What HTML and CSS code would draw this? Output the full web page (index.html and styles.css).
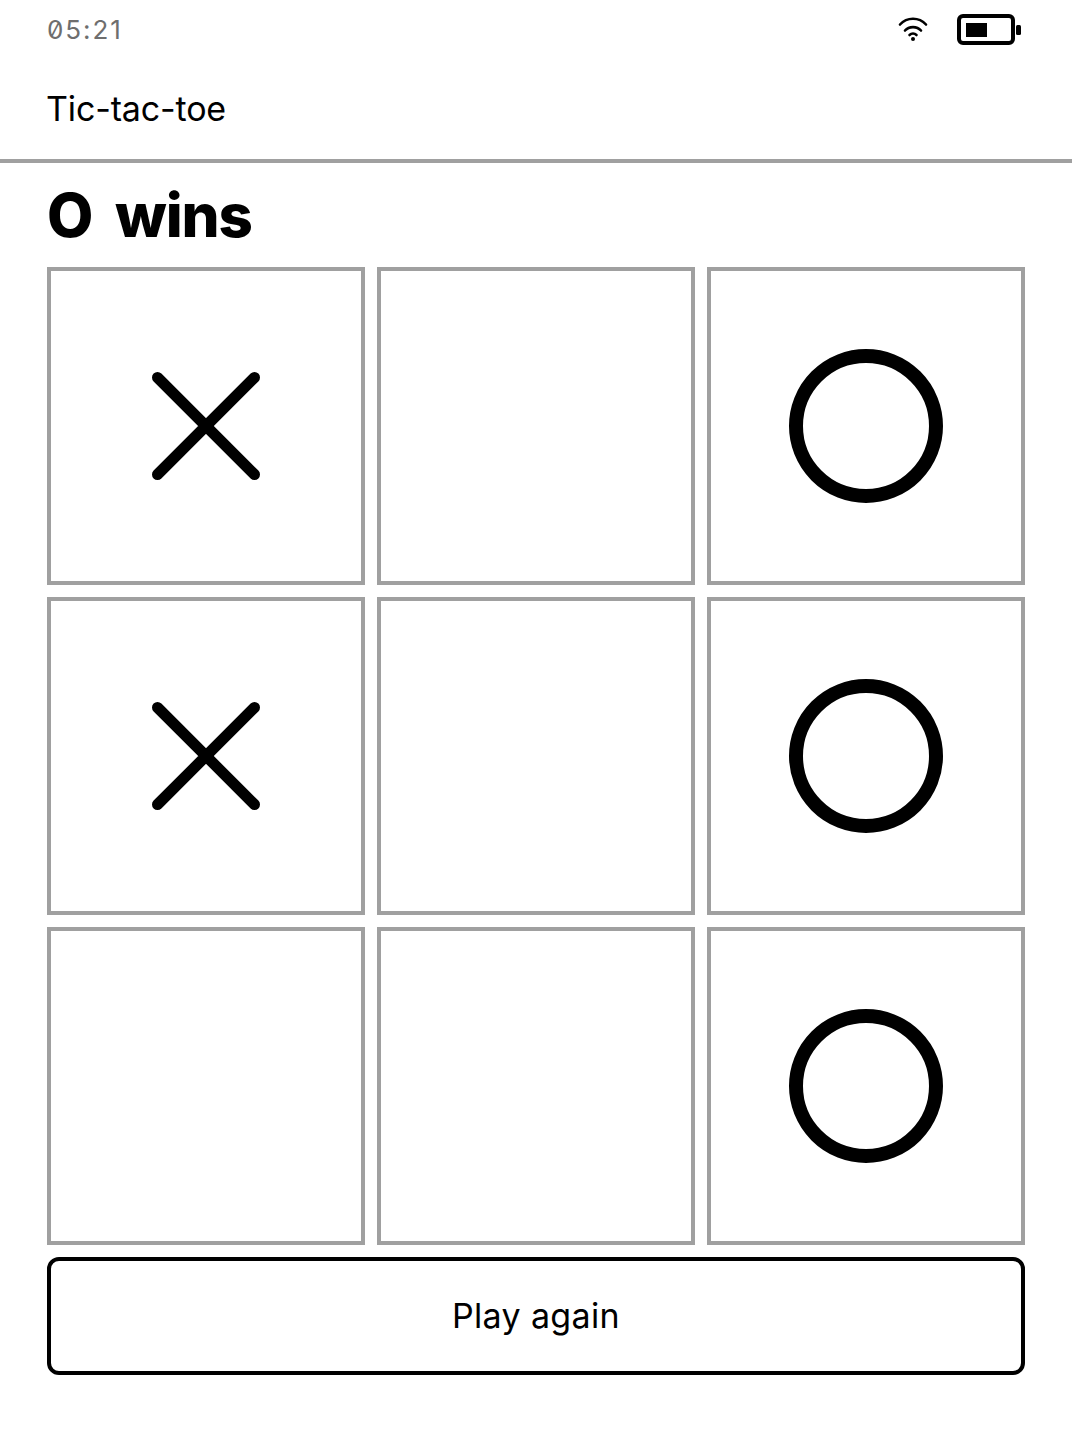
FILE: index.html
```html
<!DOCTYPE html>
<html lang="en">
<head>
<meta charset="utf-8">
<title>Tic-tac-toe</title>
<link rel="stylesheet" href="styles.css">
</head>
<body>
<div class="status">
  <span class="time">05:21</span>
  <div class="status-icons">
    <svg class="wifi" width="32" height="28" viewBox="0 0 32 28" fill="none" stroke="#000" stroke-width="2.600" stroke-linecap="round">
      <path d="M3 8.500C10 .8 22 .8 29 8.500"/>
      <path d="M8 14.500C12 10 20 10 24 14.500"/>
      <path d="M12.500 19C14.500 17.200 17.500 17.200 19.500 19"/>
      <circle cx="16" cy="23" r="2" fill="#000" stroke="none"/>
    </svg>
    <svg class="battery" width="64" height="32" viewBox="0 0 64 32">
      <rect x="2" y="2" width="54" height="27" rx="4" fill="none" stroke="#000" stroke-width="4"/>
      <rect x="9" y="9" width="21" height="14" fill="#000"/>
      <rect x="59" y="11" width="5" height="10" rx="1.500" fill="#000"/>
    </svg>
  </div>
</div>
<header class="appbar"><span>Tic-tac-toe</span></header>
<main class="game">
  <h1 class="result">O wins</h1>
  <div class="board">
    <div class="cell"><svg class="mark" viewBox="0 0 108 108"><path class="x" d="M5.500 5.500L102.500 102.500M102.500 5.500L5.500 102.500"/></svg></div>
    <div class="cell"></div>
    <div class="cell"><svg class="mark mark-o" viewBox="0 0 154 154"><circle class="o" cx="77" cy="77" r="70"/></svg></div>
    <div class="cell"><svg class="mark" viewBox="0 0 108 108"><path class="x" d="M5.500 5.500L102.500 102.500M102.500 5.500L5.500 102.500"/></svg></div>
    <div class="cell"></div>
    <div class="cell"><svg class="mark mark-o" viewBox="0 0 154 154"><circle class="o" cx="77" cy="77" r="70"/></svg></div>
    <div class="cell"></div>
    <div class="cell"></div>
    <div class="cell"><svg class="mark mark-o" viewBox="0 0 154 154"><circle class="o" cx="77" cy="77" r="70"/></svg></div>
  </div>
  <button class="again">Play again</button>
</main>
</body>
</html>
```
FILE: styles.css
```css
* { box-sizing: border-box; }
html, body { margin: 0; padding: 0; background: #fff; }
body {
  width: 1072px;
  height: 1448px;
  overflow: hidden;
  font-family: Inter, "Liberation Sans", sans-serif;
  color: #000;
}
.status {
  height: 60px;
  padding: 0 51px 0 47px;
  display: flex;
  align-items: center;
  justify-content: space-between;
}
.time {
  font-size: 26px;
  color: #6e6e6e;
  letter-spacing: 1.900px;
  font-feature-settings: "zero";
  position: relative;
  top: -1px;
}
.status-icons { display: flex; align-items: center; gap: 28px; }
.wifi { display: block; }
.battery { display: block; }
.appbar {
  height: 103px;
  border-bottom: 4px solid #a0a0a0;
  padding: 0 46px 2px;
  display: flex;
  align-items: center;
  font-size: 34px;
  letter-spacing: -0.150px;
}
.game { padding: 0 47px; }
.result {
  margin: 0;
  height: 104px;
  line-height: 104px;
  font-size: 60px;
  font-weight: 800;
  letter-spacing: -1.200px;
  word-spacing: 11px;
}
.board {
  display: grid;
  grid-template-columns: repeat(3, 318px);
  grid-auto-rows: 318px;
  gap: 12px;
}
.cell {
  border: 4px solid #a0a0a0;
  display: flex;
  align-items: center;
  justify-content: center;
}
.mark { display: block; width: 108px; height: 108px; }
.mark-o { width: 154px; height: 154px; }
.x { fill: none; stroke: #000; stroke-width: 11; stroke-linecap: round; }
.o { fill: none; stroke: #000; stroke-width: 14; }
.again {
  display: block;
  width: 978px;
  height: 118px;
  margin-top: 12px;
  padding: 0 0 2px;
  background: #fff;
  border: 4px solid #000;
  border-radius: 12px;
  font: 34px Inter, "Liberation Sans", sans-serif;
  letter-spacing: 0.350px;
  color: #000;
}
```
